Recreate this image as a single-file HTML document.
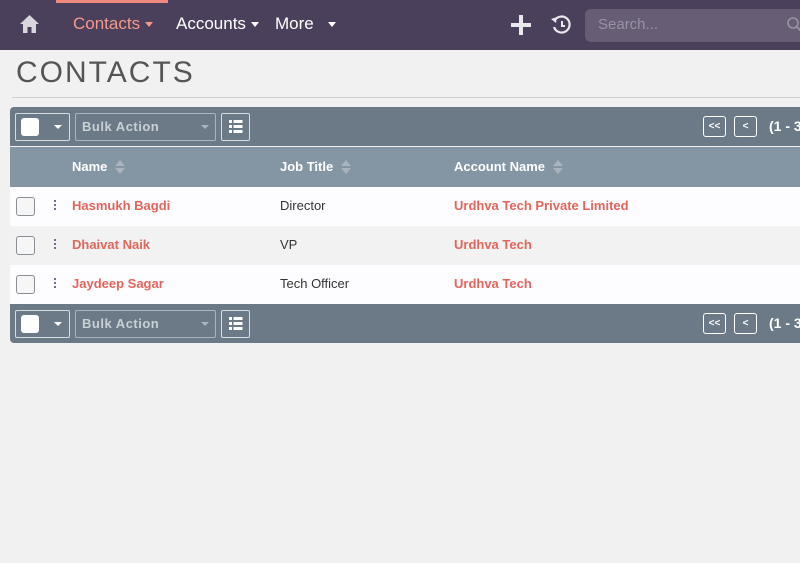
<!DOCTYPE html>
<html><head><style>
body{margin:0;width:800px;height:563px;background:#f1f1f2;font-family:"Liberation Sans",sans-serif;overflow:hidden;position:relative}
.nav{position:absolute;left:0;top:0;width:800px;height:50px;background:#4b405b}
.abs{position:absolute}
.navt{position:absolute;top:14px;font-size:17px;color:#fff}
.caret{display:inline-block;width:0;height:0;border-left:4px solid transparent;border-right:4px solid transparent;border-top:5px solid #fff;vertical-align:middle;margin-left:5px}
.bar{position:absolute;left:10px;width:800px;height:39px;background:#6b7a86}
.cb{position:absolute;top:6px;left:5px;width:53px;height:26px;border:1px solid #d6dce1;border-radius:2px}
.cb i{position:absolute;left:5px;top:4px;width:18px;height:18px;background:#fff;border-radius:3px}
.cb b{position:absolute;left:38px;top:11px;border-left:4px solid transparent;border-right:4px solid transparent;border-top:4px solid #fff}
.ba{position:absolute;top:6px;left:65px;border:1px solid #aab4bc;border-radius:2px;color:#c9d0d6;font-weight:bold;font-size:13px;line-height:26px;padding-left:6px;box-sizing:border-box;width:141px;height:28px;letter-spacing:.5px}
.ba b{position:absolute;right:6px;top:11px;border-left:4px solid transparent;border-right:4px solid transparent;border-top:4px solid #aab4bc}
.li{position:absolute;top:6px;left:211px;width:27px;height:26px;border:1px solid #d6dce1;border-radius:2px}
.pg{position:absolute;top:9px;width:21px;height:19px;border:1px solid #fff;border-radius:3px;color:#fff;font-size:10px;text-align:center;line-height:19px;font-weight:bold}
.hdr{position:absolute;left:10px;top:147px;width:800px;height:40px;background:#8495a4}
.hdr span{position:absolute;top:12px;color:#fff;font-weight:bold;font-size:13px}
.sort{display:inline-block;vertical-align:middle;margin-left:8px;width:10px;height:16px;position:relative;top:-1px}
.row{position:absolute;left:10px;width:800px;height:39px;font-size:13px}
.row .c{position:absolute;left:6px;top:10px;width:17px;height:17px;border:1px solid #8a8f95;border-radius:3px;background:#f6f6f6}
.row .d{position:absolute;left:44px;top:13px;width:2px;height:12px}
.row .d i{display:block;width:2px;height:2px;background:#6b6f90;margin-bottom:2px}
.row .n{position:absolute;left:62px;top:11px;color:#e2665c;font-weight:bold}
.row .j{position:absolute;left:270px;top:11px;color:#333}
.row .a{position:absolute;left:444px;top:11px;color:#e2665c;font-weight:bold}
</style></head><body>
<div class="nav">
 <svg class="abs" style="left:19px;top:14px" width="21" height="20" viewBox="0 0 21 20"><path d="M10.5 1 L20 10 L17 10 L17 19 L12.5 19 L12.5 13 L8.5 13 L8.5 19 L4 19 L4 10 L1 10 Z" fill="#d9d6de"/></svg>
 <div class="abs" style="left:56px;top:0;width:112px;height:3px;background:#f08a80"></div>
 <div class="navt" style="left:73px;color:#f29a8d">Contacts<span class="caret" style="border-top-color:#f29a8d"></span></div>
 <div class="navt" style="left:176px">Accounts<span class="caret"></span></div>
 <div class="navt" style="left:275px">More<span class="caret" style="margin-left:14px"></span></div>
 <svg class="abs" style="left:511px;top:15px" width="20" height="20"><rect x="8" y="0" width="4" height="20" fill="#e8e8ee"/><rect x="0" y="8" width="20" height="4" fill="#e8e8ee"/></svg>
 <svg class="abs" style="left:550px;top:14px" width="22" height="22" viewBox="0 0 22 22"><path d="M5 6 A8 8 0 1 1 4 13" fill="none" stroke="#e8e8ee" stroke-width="2.2"/><path d="M1 5 L6 9 L7 3 Z" fill="#e8e8ee"/><path d="M12 7 V12 H15" fill="none" stroke="#e8e8ee" stroke-width="2"/></svg>
 <div class="abs" style="left:585px;top:9px;width:230px;height:33px;background:#675d74;border-radius:6px"></div>
 <div class="abs" style="left:598px;top:16px;color:#9a93a5;font-size:15px">Search...</div>
 <svg class="abs" style="left:786px;top:16px" width="14" height="18"><circle cx="7" cy="7" r="5" fill="none" stroke="#9a93a5" stroke-width="1.6"/><path d="M11 11 L15 15" stroke="#9a93a5" stroke-width="2"/></svg>
</div>
<div class="abs" style="left:16px;top:56px;font-size:30px;color:#555;letter-spacing:2px">CONTACTS</div>
<div class="abs" style="left:12px;top:97px;width:790px;height:1px;background:#d0d0d2"></div>

<div class="bar" style="top:107px;border-radius:4px 4px 0 0">
 <div class="cb"><i></i><b></b></div>
 <div class="ba">Bulk Action<b></b></div>
 <div class="li"><svg width="27" height="26"><g fill="#fff"><rect x="7" y="6" width="3" height="3"/><rect x="11.5" y="6" width="9" height="3"/><rect x="7" y="11" width="3" height="3"/><rect x="11.5" y="11" width="9" height="3"/><rect x="7" y="16" width="3" height="3"/><rect x="11.5" y="16" width="9" height="3"/></g></svg></div>
 <div class="pg" style="left:693px">&lt;&lt;</div>
 <div class="pg" style="left:724px">&lt;</div>
 <div class="abs" style="left:759px;top:11px;color:#fff;font-weight:bold;font-size:14px">(1 - 3</div>
</div>
<div class="hdr">
 <span style="left:62px">Name<svg class="sort"><path d="M0 7 L5 1 L10 7Z M0 9 L5 15 L10 9Z" fill="#a9b4bf"/></svg></span>
 <span style="left:270px">Job Title<svg class="sort"><path d="M0 7 L5 1 L10 7Z M0 9 L5 15 L10 9Z" fill="#a9b4bf"/></svg></span>
 <span style="left:444px">Account Name<svg class="sort"><path d="M0 7 L5 1 L10 7Z M0 9 L5 15 L10 9Z" fill="#a9b4bf"/></svg></span>
</div>
<div class="row" style="top:187px;background:#fdfcfe"><div class="c"></div><div class="d"><i></i><i></i><i></i></div><div class="n">Hasmukh Bagdi</div><div class="j">Director</div><div class="a">Urdhva Tech Private Limited</div></div>
<div class="row" style="top:226px;background:#f2f2f3"><div class="c"></div><div class="d"><i></i><i></i><i></i></div><div class="n">Dhaivat Naik</div><div class="j">VP</div><div class="a">Urdhva Tech</div></div>
<div class="row" style="top:265px;background:#fdfcfe"><div class="c"></div><div class="d"><i></i><i></i><i></i></div><div class="n">Jaydeep Sagar</div><div class="j">Tech Officer</div><div class="a">Urdhva Tech</div></div>
<div class="bar" style="top:304px;border-radius:0 0 0 4px">
 <div class="cb"><i></i><b></b></div>
 <div class="ba">Bulk Action<b></b></div>
 <div class="li"><svg width="27" height="26"><g fill="#fff"><rect x="7" y="6" width="3" height="3"/><rect x="11.5" y="6" width="9" height="3"/><rect x="7" y="11" width="3" height="3"/><rect x="11.5" y="11" width="9" height="3"/><rect x="7" y="16" width="3" height="3"/><rect x="11.5" y="16" width="9" height="3"/></g></svg></div>
 <div class="pg" style="left:693px">&lt;&lt;</div>
 <div class="pg" style="left:724px">&lt;</div>
 <div class="abs" style="left:759px;top:11px;color:#fff;font-weight:bold;font-size:14px">(1 - 3</div>
</div>
</body></html>
